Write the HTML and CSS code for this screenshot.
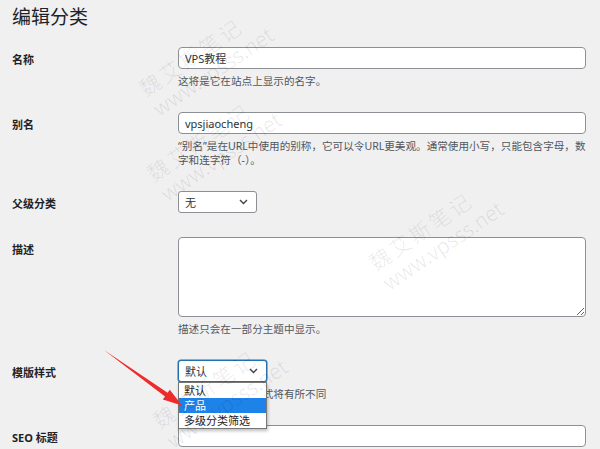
FILE: index.html
```html
<!DOCTYPE html>
<html lang="zh-CN">
<head>
    <meta charset="UTF-8">
    <meta name="viewport" content="width=device-width, initial-scale=1.0">
    <title>编辑分类</title>
    <link rel="stylesheet" href="styles.css">
</head>
<body>
    <div class="wrap">
        <h1 class="page-title">编辑分类</h1>

        <form class="edit-form">
            <!-- 名称 -->
            <div class="form-field">
                <label class="field-label">名称</label>
                <div class="field-body">
                    <input class="text-input" type="text" value="VPS教程">
                    <p class="help">这将是它在站点上显示的名字。</p>
                </div>
            </div>

            <!-- 别名 -->
            <div class="form-field">
                <label class="field-label">别名</label>
                <div class="field-body">
                    <input class="text-input" type="text" value="vpsjiaocheng">
                    <p class="help">“别名”是在URL中使用的别称，它可以令URL更美观。通常使用小写，只能包含字母，数字和连字符（-）。</p>
                </div>
            </div>

            <!-- 父级分类 -->
            <div class="form-field">
                <label class="field-label">父级分类</label>
                <div class="field-body">
                    <div class="select select-parent">
                        <span>无</span>
                        <svg class="chevron" width="9" height="6" viewBox="0 0 9 6"><path d="M1 1l3.5 3.5L8 1" fill="none" stroke="#3c434a" stroke-width="1.4"/></svg>
                    </div>
                </div>
            </div>

            <!-- 描述 -->
            <div class="form-field">
                <label class="field-label">描述</label>
                <div class="field-body">
                    <textarea class="text-area"></textarea>
                    <p class="help">描述只会在一部分主题中显示。</p>
                </div>
            </div>

            <!-- 模版样式 -->
            <div class="form-field">
                <label class="field-label">模版样式</label>
                <div class="field-body">
                    <div class="select select-template is-open">
                        <span>默认</span>
                        <svg class="chevron" width="9" height="6" viewBox="0 0 9 6"><path d="M1 1l3.5 3.5L8 1" fill="none" stroke="#3c434a" stroke-width="1.4"/></svg>
                        <ul class="dropdown">
                            <li>默认</li>
                            <li class="active">产品</li>
                            <li>多级分类筛选</li>
                        </ul>
                    </div>
                    <p class="help">不同模版的显示样式将有所不同</p>
                </div>
            </div>

            <!-- SEO 标题 -->
            <div class="form-field">
                <label class="field-label">SEO 标题</label>
                <div class="field-body">
                    <input class="text-input" type="text" value="">
                </div>
            </div>
        </form>
    </div>

    <!-- 水印 -->
    <div class="wm wm-a"><span>魏艾斯笔记</span><span>www.vpsss.net</span></div>
    <div class="wm wm-b"><span>魏艾斯笔记</span><span>www.vpsss.net</span></div>
    <div class="wm wm-c"><span>魏艾斯笔记</span><span>www.vpsss.net</span></div>
    <div class="wm wm-d"><span>魏艾斯笔记</span><span>www.vpsss.net</span></div>

    <!-- 红色箭头 -->
    <svg class="arrow" width="600" height="449" viewBox="0 0 600 449">
        <polygon points="104,350 167.6,392.8 169.8,389.7 182,405.5 162.8,399.5 165,396.4" fill="#ee2b2b"/>
    </svg>
</body>
</html>
```

FILE: styles.css
```css
* {
    margin: 0;
    padding: 0;
    box-sizing: border-box;
}

html, body {
    height: 449px;
    overflow: hidden;
}

body {
    font-family: "Noto Sans", "Noto Sans CJK SC", sans-serif;
    background: #f0f0f1;
    color: #1d2327;
    position: relative;
}

.wrap {
    padding: 5px 14px 0 12px;
}

/* 标题 */
.page-title {
    font-size: 19px;
    font-weight: 400;
    line-height: 25px;
    margin-bottom: 17px;
}

/* 表单行 */
.form-field {
    display: grid;
    grid-template-columns: 166px 408px;
    align-items: start;
    margin-bottom: 24px;
}

.field-label {
    height: 22px;
    padding-top: 2px;
    font-size: 11px;
    font-weight: 700;
    line-height: 22px;
    color: #1d2327;
}

.text-input {
    display: block;
    width: 100%;
    height: 22px;
    padding: 0 6px;
    font-family: inherit;
    font-size: 11px;
    color: #2c3338;
    background: #fff;
    border: 1px solid #8c8f94;
    border-radius: 4px;
}

.text-area {
    display: block;
    width: 100%;
    height: 80px;
    padding: 4px 6px;
    font-family: inherit;
    font-size: 11px;
    background: #fff;
    border: 1px solid #8c8f94;
    border-radius: 4px;
    resize: both;
}

.help {
    margin-top: 5px;
    font-size: 10.6px;
    line-height: 14px;
    color: #50575e;
}

/* 下拉框 */
.select {
    position: relative;
    display: flex;
    align-items: center;
    justify-content: space-between;
    height: 22px;
    padding: 0 8px 0 6px;
    font-size: 11px;
    color: #2c3338;
    background: #fff;
    border: 1px solid #8c8f94;
    border-radius: 3px;
}

.select-parent {
    width: 79px;
}

.select-template {
    width: 89px;
    z-index: 2;
}

.select.is-open {
    border-color: #2271b1;
    box-shadow: 0 0 0 0.5px #2271b1;
}

.dropdown {
    position: absolute;
    top: 21px;
    left: -1px;
    width: 89px;
    list-style: none;
    background: #fff;
    border: 1px solid #767676;
    box-shadow: 1px 2px 3px rgba(0, 0, 0, 0.25);
}

.dropdown li {
    height: 15px;
    line-height: 15px;
    padding-left: 5px;
    font-size: 11px;
    color: #1d2327;
}

.dropdown li.active {
    background: #1e83e8;
    color: #fff;
}

/* 水印 */
.wm {
    position: absolute;
    transform-origin: 0 0;
    transform: rotate(-34deg);
    color: rgba(0, 0, 0, 0.1);
    font-family: "Noto Sans CJK SC", sans-serif;
    font-weight: 300;
    font-size: 21px;
    line-height: 24px;
    pointer-events: none;
    white-space: nowrap;
    z-index: 5;
}

.wm span {
    display: block;
}

.wm span:first-child {
    letter-spacing: 3px;
}

.wm-a { left: 134px; top: 80px; }
.wm-b { left: 364px; top: 254px; }
.wm-c { left: 148px; top: 412px; }
.wm-d { left: 142px; top: 165px; }

/* 箭头 */
.arrow {
    position: absolute;
    top: 0;
    left: 0;
    pointer-events: none;
    z-index: 6;
}
```
